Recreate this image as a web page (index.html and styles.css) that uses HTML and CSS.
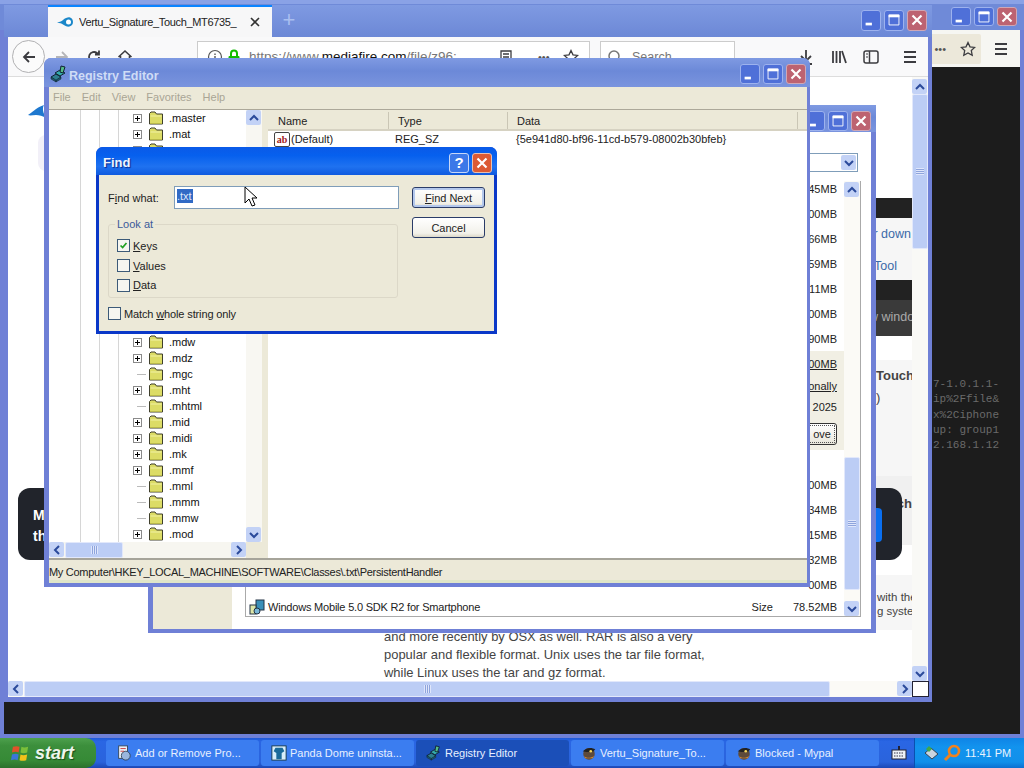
FILE: index.html
```html
<!DOCTYPE html>
<html lang="en">
<head>
<meta charset="utf-8">
<title>Registry Editor</title>
<link rel="stylesheet" href="styles.css">
</head>
<body>
<svg class="defs" width="0" height="0" aria-hidden="true">
  <symbol id="i-min" viewBox="0 0 20 20"><rect x="4" y="13" width="7" height="3" fill="#fff"/></symbol>
  <symbol id="i-max" viewBox="0 0 20 20"><path d="M4.5 4.5h11v11h-11z" fill="none" stroke="#fff"/><rect x="4" y="4" width="12" height="3" fill="#fff"/></symbol>
  <symbol id="i-close" viewBox="0 0 20 20"><path d="M5 5l10 10M15 5L5 15" stroke="#fff" stroke-width="2.4" fill="none"/></symbol>
  <symbol id="i-up" viewBox="0 0 14 14"><path d="M3 9l4-4 4 4" fill="none" stroke="#2b4a9b" stroke-width="2"/></symbol>
  <symbol id="i-down" viewBox="0 0 14 14"><path d="M3 5l4 4 4-4" fill="none" stroke="#2b4a9b" stroke-width="2"/></symbol>
  <symbol id="i-left" viewBox="0 0 14 14"><path d="M9 3L5 7l4 4" fill="none" stroke="#2b4a9b" stroke-width="2"/></symbol>
  <symbol id="i-right" viewBox="0 0 14 14"><path d="M5 3l4 4-4 4" fill="none" stroke="#2b4a9b" stroke-width="2"/></symbol>
  <symbol id="i-folder" viewBox="0 0 16 14"><path d="M1.500 13V2.500L3 1h4l1.500 2H14.500V13z" fill="#dcdc66" stroke="#3f3f2c"/><path d="M2.500 5h11" stroke="#f2f2a6"/><path d="M2 12.500h12" stroke="#b8b84a"/></symbol>
  <symbol id="i-plus" viewBox="0 0 9 9"><rect x=".5" y=".5" width="8" height="8" fill="#fff" stroke="#8a8a8a"/><path d="M2 4.500h5M4.500 2v5" stroke="#000"/></symbol>
  <symbol id="i-burger" viewBox="0 0 16 16"><path d="M2 3h12M2 8h12M2 13h12" stroke="#3c3c40" stroke-width="1.800"/></symbol>
  <symbol id="i-star" viewBox="0 0 16 16"><path d="M8 1.500l2 4.300 4.700.6-3.400 3.200.9 4.700L8 12l-4.200 2.300.9-4.700L1.300 6.400 6 5.800z" fill="none" stroke="#3c3c40" stroke-width="1.300"/></symbol>
  <symbol id="i-regedit" viewBox="0 0 18 18"><path d="M1 12l5-3 5 3-5 4z" fill="#2d7f8f" stroke="#123"/><path d="M5 8l5-3 5 3-5 3z" fill="#3aa" stroke="#123"/><path d="M1 12v2l5 3v-2zM11 12v2l-5 3v-2z" fill="#1d5a6b" stroke="#123" stroke-width=".5"/><path d="M11 1l4 1-2 6-3-1z" fill="#5b8" stroke="#123"/></symbol>
  <symbol id="i-fox" viewBox="0 0 18 18"><circle cx="9" cy="10" r="6.500" fill="#5d4a3a"/><path d="M2 7c4-4 10-5 14-2l-3 3H6z" fill="#222"/><path d="M3 12c3 3 8 3 12 0l-2 3H5z" fill="#d98a30"/><circle cx="11" cy="7" r="1.500" fill="#f5d65b"/></symbol>
</svg>

<div class="desktop">
  <!-- back browser window -->
  <section class="win win-back">
    <div class="win-title back-title">
      <span class="caps">
        <span class="cap"><svg><use href="#i-min"/></svg></span>
        <span class="cap"><svg><use href="#i-max"/></svg></span>
        <span class="cap cap-close"><svg><use href="#i-close"/></svg></span>
      </span>
    </div>
    <div class="back-toolbar">
      <span class="back-pill"><span class="dots">•••</span><svg class="ico16"><use href="#i-star"/></svg></span>
      <svg class="ico16"><use href="#i-burger"/></svg>
    </div>
    <pre class="term">7-1.0.1.1-
ip%2Ffile&amp;
x%2Ciphone
up: group1
2.168.1.12</pre>
  </section>

  <!-- main browser window -->
  <section class="win win-fox">
    <div class="tabbar">
      <div class="tab">
        <svg class="tab-logo" viewBox="0 0 16 10"><path d="M0 5.500C3 5 5 4 6 3 8 1 11 0 12.500 .3 15 1 16 3 16 5s-1 4-3.500 4.500C10.500 10 8 9 6 7.500 4.500 6.500 3 6 0 5.500z" fill="#1b87c9"/><ellipse cx="11.500" cy="5" rx="2.500" ry="2.500" fill="#fff"/></svg>
        <span class="tab-text">Vertu_Signature_Touch_MT6735_</span>
        <svg class="tab-x" viewBox="0 0 10 10"><path d="M1 1l8 8M9 1L1 9" stroke="#333" stroke-width="1.600"/></svg>
      </div>
      <span class="tab-plus">+</span>
      <span class="caps">
        <span class="cap"><svg><use href="#i-min"/></svg></span>
        <span class="cap"><svg><use href="#i-max"/></svg></span>
        <span class="cap cap-close"><svg><use href="#i-close"/></svg></span>
      </span>
    </div>
    <div class="navbar">
      <span class="back-btn"><svg class="ico16" viewBox="0 0 16 16"><path d="M14 8H3M8 3L3 8l5 5" fill="none" stroke="#3c3c40" stroke-width="1.800"/></svg></span>
      <svg class="ico16 nav-fwd" viewBox="0 0 16 16"><path d="M2 8h11M8 3l5 5-5 5" fill="none" stroke="#b5b5b8" stroke-width="1.800"/></svg>
      <svg class="ico16 nav-reload" viewBox="0 0 16 16"><path d="M13 8a5 5 0 1 1-2-4l2 1.500M13 1.500v4H9" fill="none" stroke="#3c3c40" stroke-width="1.800"/></svg>
      <svg class="ico16 nav-home" viewBox="0 0 16 16"><path d="M1.500 8L8 2l6.500 6M3.500 7v7h9V7" fill="none" stroke="#3c3c40" stroke-width="1.600"/></svg>
      <div class="urlbar">
        <svg class="ico16" viewBox="0 0 16 16"><circle cx="8" cy="8" r="6.500" fill="none" stroke="#555" stroke-width="1.200"/><path d="M8 7v4M8 4.500v1.500" stroke="#555" stroke-width="1.400"/></svg>
        <svg class="url-lock" viewBox="0 0 14 16"><path d="M4 7V4.500a3 3 0 0 1 6 0V7" fill="none" stroke="#12bc00" stroke-width="2"/><rect x="1.500" y="7" width="11" height="8" rx="1" fill="#12bc00"/></svg>
        <span class="url-text">https://www.<b>mediafire.com</b>/file/z96:</span>
        <svg class="ico16 url-page" viewBox="0 0 16 16"><path d="M3 2h10v12H3zM5 5h6M5 8h6M5 11h6" fill="none" stroke="#3c3c40" stroke-width="1.300"/></svg>
        <span class="dots url-dots">•••</span>
        <svg class="ico16"><use href="#i-star"/></svg>
      </div>
      <div class="searchbar">
        <svg class="ico16" viewBox="0 0 16 16"><circle cx="7" cy="7" r="5" fill="none" stroke="#777" stroke-width="1.500"/><path d="M11 11l4 4" stroke="#777" stroke-width="1.500"/></svg>
        <span>Search</span>
      </div>
      <svg class="ico16 nav-dl" viewBox="0 0 16 16"><path d="M8 1v10M3 7l5 5 5-5M2 15h12" fill="none" stroke="#3c3c40" stroke-width="1.800"/></svg>
      <svg class="ico16 nav-lib" viewBox="0 0 16 16"><path d="M2 2v12M5.500 2v12M9 2v12M11 2l4 12" fill="none" stroke="#3c3c40" stroke-width="1.800"/></svg>
      <svg class="ico16 nav-side" viewBox="0 0 16 16"><rect x="1" y="2" width="14" height="12" rx="2" fill="none" stroke="#3c3c40" stroke-width="1.500"/><path d="M6.500 2v12" stroke="#3c3c40" stroke-width="1.500"/><path d="M3 5h2M3 8h2" stroke="#3c3c40"/></svg>
      <svg class="ico16 nav-burger"><use href="#i-burger"/></svg>
    </div>
    <div class="fox-body">
      <div class="page">
        <div class="page-main">
          <svg class="page-logo" viewBox="0 0 18 16"><path d="M0 10C4 8 7 3 16 0c-2 3-1 8 2 13-3-2-7-3-10-3-3 0-6 1-8 0z" fill="#1e78cf"/></svg>
          <div class="page-ghost"></div>
          <p class="page-text">and more recently by OSX as well. RAR is also a very<br>popular and flexible format. Unix uses the tar file format,<br>while Linux uses the tar and gz format.</p>
        </div>
        <div class="page-side">
          <div class="side-dark"></div>
          <div class="side-links">
            <span class="side-down">or down</span>
            <span class="side-tool">Tool</span>
          </div>
          <div class="side-dark"></div>
          <div class="side-notice">New window</div>
          <div class="side-card">
            <b class="side-touch">Touch</b>
            <span class="side-paren">)</span>
          </div>
          <div class="side-card2"><b>Touch</b></div>
          <div class="side-white"></div>
          <div class="side-foot">with the<br>g system</div>
        </div>
        <div class="toast">
          <b>M<br>th</b>
          <span class="toast-btn"></span>
        </div>
      </div>
      <div class="sb sb-v sb-page">
        <span class="sb-btn"><svg><use href="#i-up"/></svg></span>
        <span class="sb-thumb thumb-page"><span class="grip-h"></span></span>
        <span class="sb-track"></span>
        <span class="sb-btn"><svg><use href="#i-down"/></svg></span>
      </div>
    </div>
    <div class="fox-foot">
      <div class="sb sb-h sb-pageh">
        <span class="sb-btn"><svg><use href="#i-left"/></svg></span>
        <span class="sb-thumb thumb-pageh"><span class="grip-v"></span></span>
        <span class="sb-track"></span>
        <span class="sb-btn"><svg><use href="#i-right"/></svg></span>
      </div>
      <span class="fox-corner"></span>
    </div>
  </section>

  <!-- Add or Remove Programs -->
  <section class="win win-arp">
    <div class="win-title arp-title">
      <span class="caps">
        <span class="cap"><svg><use href="#i-min"/></svg></span>
        <span class="cap"><svg><use href="#i-max"/></svg></span>
        <span class="cap cap-close"><svg><use href="#i-close"/></svg></span>
      </span>
    </div>
    <div class="arp-body">
      <div class="arp-side"></div>
      <div class="arp-content">
        <div class="arp-combo"><span class="sb-btn"><svg><use href="#i-down"/></svg></span></div>
        <div class="arp-list">
          <div class="arp-rows">
            <div class="arp-row">45MB</div>
            <div class="arp-row">00MB</div>
            <div class="arp-row">66MB</div>
            <div class="arp-row">59MB</div>
            <div class="arp-row">11MB</div>
            <div class="arp-row">00MB</div>
            <div class="arp-row">90MB</div>
            <div class="arp-selected">
              <div class="arp-row"><u>00MB</u></div>
              <div class="arp-row arp-r20"><u>onally</u></div>
              <div class="arp-row arp-r22">2025</div>
              <div class="arp-row arp-r32"><span class="arp-btn">ove</span></div>
            </div>
            <div class="arp-gap"></div>
            <div class="arp-row">00MB</div>
            <div class="arp-row">34MB</div>
            <div class="arp-row">15MB</div>
            <div class="arp-row">32MB</div>
            <div class="arp-row">00MB</div>
            <div class="arp-row arp-r20 arp-last">
              <svg class="arp-ico" viewBox="0 0 16 16"><rect x="7" y="1" width="8" height="10" fill="#3a8fb8" stroke="#234"/><rect x="1" y="6" width="6" height="9" fill="#dfe7a8" stroke="#234"/><circle cx="8" cy="12" r="3" fill="#7ab8d8" stroke="#234"/></svg>
              <span class="arp-name">Windows Mobile 5.0 SDK R2 for Smartphone</span>
              <span class="arp-size">Size</span>
              <span>78.52MB</span>
            </div>
          </div>
          <div class="sb sb-v sb-arp">
            <span class="sb-btn"><svg><use href="#i-up"/></svg></span>
            <span class="sb-track arp-track1"></span>
            <span class="sb-thumb thumb-arp"><span class="grip-h"></span></span>
            <span class="sb-track"></span>
            <span class="sb-btn"><svg><use href="#i-down"/></svg></span>
          </div>
        </div>
      </div>
    </div>
  </section>

  <!-- Registry Editor -->
  <section class="win win-reg">
    <div class="win-title reg-title">
      <svg class="reg-ico"><use href="#i-regedit"/></svg>
      <span class="reg-name">Registry Editor</span>
      <span class="caps">
        <span class="cap"><svg><use href="#i-min"/></svg></span>
        <span class="cap"><svg><use href="#i-max"/></svg></span>
        <span class="cap cap-close"><svg><use href="#i-close"/></svg></span>
      </span>
    </div>
    <nav class="reg-menu"><span>File</span><span>Edit</span><span>View</span><span>Favorites</span><span>Help</span></nav>
    <div class="reg-main">
      <div class="tree-pane">
        <div class="tree-top">
          <ul class="tree">
            <li><svg class="t-box"><use href="#i-plus"/></svg><svg class="t-folder"><use href="#i-folder"/></svg>.master</li>
            <li><svg class="t-box"><use href="#i-plus"/></svg><svg class="t-folder"><use href="#i-folder"/></svg>.mat</li>
            <li><svg class="t-box"><use href="#i-plus"/></svg><svg class="t-folder"><use href="#i-folder"/></svg></li>
            <li class="tree-covered"></li>
            <li><svg class="t-box"><use href="#i-plus"/></svg><svg class="t-folder"><use href="#i-folder"/></svg>.mdw</li>
            <li><svg class="t-box"><use href="#i-plus"/></svg><svg class="t-folder"><use href="#i-folder"/></svg>.mdz</li>
            <li><span class="t-leaf"></span><svg class="t-folder"><use href="#i-folder"/></svg>.mgc</li>
            <li><svg class="t-box"><use href="#i-plus"/></svg><svg class="t-folder"><use href="#i-folder"/></svg>.mht</li>
            <li><span class="t-leaf"></span><svg class="t-folder"><use href="#i-folder"/></svg>.mhtml</li>
            <li><svg class="t-box"><use href="#i-plus"/></svg><svg class="t-folder"><use href="#i-folder"/></svg>.mid</li>
            <li><svg class="t-box"><use href="#i-plus"/></svg><svg class="t-folder"><use href="#i-folder"/></svg>.midi</li>
            <li><svg class="t-box"><use href="#i-plus"/></svg><svg class="t-folder"><use href="#i-folder"/></svg>.mk</li>
            <li><svg class="t-box"><use href="#i-plus"/></svg><svg class="t-folder"><use href="#i-folder"/></svg>.mmf</li>
            <li><span class="t-leaf"></span><svg class="t-folder"><use href="#i-folder"/></svg>.mml</li>
            <li><span class="t-leaf"></span><svg class="t-folder"><use href="#i-folder"/></svg>.mmm</li>
            <li><span class="t-leaf"></span><svg class="t-folder"><use href="#i-folder"/></svg>.mmw</li>
            <li><svg class="t-box"><use href="#i-plus"/></svg><svg class="t-folder"><use href="#i-folder"/></svg>.mod</li>
          </ul>
          <div class="sb sb-v sb-tree">
            <span class="sb-btn"><svg><use href="#i-up"/></svg></span>
            <span class="sb-track"></span>
            <span class="sb-btn"><svg><use href="#i-down"/></svg></span>
          </div>
        </div>
        <div class="tree-bottom">
          <div class="sb sb-h sb-treeh">
            <span class="sb-btn"><svg><use href="#i-left"/></svg></span>
            <span class="sb-thumb thumb-tree"><span class="grip-v"></span></span>
            <span class="sb-track"></span>
            <span class="sb-btn"><svg><use href="#i-right"/></svg></span>
          </div>
          <span class="tree-corner"></span>
        </div>
      </div>
      <div class="list-pane">
        <div class="list-head"><span class="lh-name">Name</span><span class="lh-type">Type</span><span class="lh-data">Data</span><span class="lh-rest"></span></div>
        <div class="list-row">
          <span class="ab-ico">ab</span>
          <span class="lc-name">(Default)</span>
          <span class="lc-type">REG_SZ</span>
          <span class="lc-data">{5e941d80-bf96-11cd-b579-08002b30bfeb}</span>
        </div>
      </div>
    </div>
    <div class="reg-status">My Computer\HKEY_LOCAL_MACHINE\SOFTWARE\Classes\.txt\PersistentHandler</div>
  </section>

  <!-- Find dialog -->
  <section class="find">
    <div class="find-title">
      <span class="find-name">Find</span>
      <span class="find-help">?</span>
      <span class="find-close"><svg><use href="#i-close"/></svg></span>
    </div>
    <div class="find-body">
      <div class="find-left">
        <div class="find-row">
          <label class="find-label">F<u>i</u>nd what:</label>
          <div class="find-input"><span class="find-sel">.txt</span></div>
        </div>
        <fieldset class="find-group">
          <legend>Look at</legend>
          <label class="chk"><span class="box"><svg viewBox="0 0 13 13"><path d="M3 6.500l2.500 2.500L10 3.500" fill="none" stroke="#21a121" stroke-width="2"/></svg></span><span><u>K</u>eys</span></label>
          <label class="chk"><span class="box"></span><span><u>V</u>alues</span></label>
          <label class="chk"><span class="box"></span><span><u>D</u>ata</span></label>
        </fieldset>
        <label class="chk chk-match"><span class="box"></span><span>Match <u>w</u>hole string only</span></label>
      </div>
      <div class="find-right">
        <button class="xp-btn xp-default" type="button"><u>F</u>ind Next</button>
        <button class="xp-btn" type="button">Cancel</button>
      </div>
    </div>
  </section>

  <svg class="cursor" viewBox="0 0 14 22"><path d="M1 1v16l4-4 3 7 3-1-3-7h5z" fill="#fff" stroke="#000"/></svg>

  <!-- Taskbar -->
  <footer class="taskbar">
    <div class="start">
      <svg class="start-flag" viewBox="0 0 20 20"><path d="M2 3c3-1 5-1 7 0l-1 6c-2-1-4-1-7 0z" fill="#e0522a"/><path d="M11 3c2 1 4 1 7 0l-1 6c-3 1-5 1-7 0z" fill="#7bbf3a"/><path d="M1 11c3-1 5-1 7 0l-1 6c-2-1-4-1-7 0z" fill="#3b76d8"/><path d="M10 11c2 1 4 1 7 0l-1 6c-3 1-5 1-7 0z" fill="#f2c21a"/></svg>
      <span class="start-text">start</span>
    </div>
    <div class="tasks">
      <div class="task"><svg class="task-ico" viewBox="0 0 18 18"><rect x="3" y="1" width="10" height="14" fill="#eaf0f8" stroke="#345"/><circle cx="11" cy="12" r="5" fill="#9ab6dd" stroke="#345"/><path d="M5 4h6M5 7h4" stroke="#c33"/></svg><span>Add or Remove Pro...</span></div>
      <div class="task"><svg class="task-ico" viewBox="0 0 18 18"><rect x="1" y="1" width="16" height="16" fill="#d8eefb" stroke="#134"/><path d="M5 3h8l2 4-3 2v7H6V9L3 7z" fill="#1a6a9a"/></svg><span>Panda Dome uninsta...</span></div>
      <div class="task task-active"><svg class="task-ico"><use href="#i-regedit"/></svg><span>Registry Editor</span></div>
      <div class="task"><svg class="task-ico"><use href="#i-fox"/></svg><span>Vertu_Signature_To...</span></div>
      <div class="task"><svg class="task-ico"><use href="#i-fox"/></svg><span>Blocked - Mypal</span></div>
    </div>
    <svg class="kbd" viewBox="0 0 16 14"><path d="M8 0v4" stroke="#223" stroke-width="2"/><rect x="1" y="4" width="14" height="9" fill="#eef2f8" stroke="#223"/><path d="M3 7h10M3 10h10" stroke="#334" stroke-dasharray="1.500 1"/></svg>
    <div class="tray">
      <svg class="tray-net" viewBox="0 0 16 16"><path d="M1 8l6-5 7 6-6 5z" fill="#c9d4e0" stroke="#345"/><path d="M5 1l3 3-3 3-3-3z" fill="#3fa84a"/></svg>
      <svg class="tray-find" viewBox="0 0 18 18"><circle cx="11" cy="7" r="5" fill="none" stroke="#f0821e" stroke-width="2.600"/><path d="M7 11l-5 5" stroke="#f0821e" stroke-width="3"/></svg>
      <span class="clock">11:41 PM</span>
    </div>
  </footer>
</div>
</body>
</html>
```
FILE: styles.css
```css
* { box-sizing: border-box; }
html, body { margin: 0; padding: 0; background: #1c1c1c; }
body { font-family: "Liberation Sans", Arial, sans-serif; font-size: 11px; color: #111; }
.defs { position: absolute; }
ul { list-style: none; margin: 0; padding: 0; }

.desktop { position: relative; width: 1024px; height: 768px; overflow: hidden; background: #1c1c1c; display: flex; flex-direction: column; justify-content: flex-end; }

/* windows */
.win { position: absolute; display: flex; flex-direction: column; background: #6f80d6; border-radius: 7px 7px 0 0; }
.win-title { display: flex; align-items: flex-start; background: linear-gradient(#7f9ae2, #6c89d8 45%, #7a94de); }
.caps { display: flex; gap: 3px; margin-left: auto; }
.cap { width: 20px; height: 20px; border-radius: 3px; background: #4f70d8; border: 1px solid #9db2ee; display: block; }
.cap svg { display: block; width: 18px; height: 18px; }
.cap-close { background: #bd6371; border-color: #cfa7b5; }

.win-back { left: 0; top: 0; width: 1024px; height: 738px; padding: 0 4px 4px; }
.back-title { height: 30px; padding: 7px 7px 0 0; background: linear-gradient(#8aa2e6 0 4px, #6f8ad8 4px); margin: 0 -4px; }
.win-back .cap { height: 19px; }
.back-toolbar { height: 37px; background: #f6f6f2; display: flex; align-items: center; justify-content: flex-end; padding-right: 11px; }
.back-pill { display: flex; align-items: center; justify-content: flex-end; gap: 14px; width: 70px; height: 30px; margin-right: 12px; background: #ece8da; border-radius: 2px; padding-right: 5px; }
.term { flex: 1; margin: 0; background: #1c1c1c; padding: 310px 0 0 929px; color: #6a6a6a; font: 11px/15.250px "Liberation Mono", monospace; overflow: hidden; }

.ico16 { width: 16px; height: 16px; flex: none; display: block; }
.dots { color: #555; font-size: 11px; white-space: nowrap; }

.win-fox { left: 4px; top: 5px; width: 928px; height: 697px; padding: 0 4px 5px; border-radius: 4px 4px 0 0; }
.tabbar { height: 32px; display: flex; align-items: stretch; margin: 0 -4px; padding: 0 5px 0 44px; background: linear-gradient(#7f9ae2, #6c88d6); }
.tab { width: 224px; background: #f7f7f8; border-top: 2px solid #0a84ff; display: flex; align-items: center; padding: 0 10px 0 9px; }
.tab-logo { width: 16px; height: 10px; flex: none; }
.tab-text { margin-left: 6px; font-size: 11px; letter-spacing: -.33px; color: #222; white-space: nowrap; overflow: hidden; width: 162px; }
.tab-x { width: 10px; height: 10px; margin-left: 9px; }
.tab-plus { width: 34px; text-align: center; color: #a9bff0; font-size: 22px; line-height: 30px; }
.tabbar .caps { margin-top: 5px; height: 21px; }
.tabbar .cap { height: 21px; }

.navbar { height: 40px; flex: none; background: #f9f9fa; border-bottom: 1px solid #ddd; display: flex; align-items: center; padding-left: 4px; }
.back-btn { width: 33px; height: 33px; border-radius: 50%; background: #fbfbfb; border: 1px solid #b1b1b3; display: flex; align-items: center; justify-content: center; }
.nav-fwd { margin-left: 9px; }
.nav-reload { margin-left: 16px; }
.nav-home { margin-left: 15px; }
.urlbar { width: 393px; height: 32px; margin-left: 64px; border: 1px solid #ccc; background: #fff; display: flex; align-items: center; padding: 0 7px 0 9px; }
.url-lock { width: 14px; height: 16px; margin-left: 4px; flex: none; }
.url-text { margin-left: 8px; font-size: 13.500px; color: #777; white-space: nowrap; width: 249px; overflow: hidden; }
.url-text b { font-weight: normal; color: #111; }
.url-dots { margin: 0 13px 0 24px; }
.searchbar { width: 135px; height: 32px; margin-left: 10px; border: 1px solid #ccc; background: #fff; display: flex; align-items: center; gap: 9px; padding-left: 6px; color: #777; font-size: 12.500px; }
.nav-dl { margin-left: 63px; }
.nav-lib { margin-left: 17px; }
.nav-side { margin-left: 16px; }
.nav-burger { margin-left: 23px; }

.fox-body { flex: 1; min-height: 0; display: flex; background: #fff; }
.page { position: relative; flex: 1; display: flex; overflow: hidden; background: #fff; }
.page-main { flex: 1; display: flex; flex-direction: column; padding-top: 28px; min-width: 0; }
.page-logo { width: 18px; height: 16px; margin-left: 20px; flex: none; }
.page-ghost { width: 10px; height: 36px; margin: 14px 0 0 30px; background: #f2f0f8; border-radius: 8px 0 0 8px; }
.page-text { margin: auto 0 -1px 376px; font-size: 12.950px; line-height: 18px; color: #444; white-space: nowrap; }
.page-side { width: 64px; flex: none; display: flex; flex-direction: column; padding-top: 121px; color: #444; overflow: hidden; white-space: nowrap; }
.side-dark { height: 20px; background: #222; flex: none; }
.side-links { height: 62px; background: #f6f6f6; display: flex; flex-direction: column; flex: none; color: #3c6aa8; font-size: 12.500px; }
.side-down { text-align: right; margin-top: 9px; padding-right: 1px; }
.side-tool { margin: 18px 0 0 26px; }
.side-notice { height: 36px; background: #3a3a3a; color: #aaa; font-size: 12.500px; line-height: 35px; flex: none; padding-left: 5px; }
.side-card { height: 116px; margin-top: 24px; background: #f6f6f6; display: flex; flex-direction: column; flex: none; font-size: 13px; padding-left: 28px; }
.side-touch { margin-top: 8px; }
.side-paren { margin-top: 7px; }
.side-card2 { height: 69px; background: #f0f0f0; flex: none; padding: 20px 0 0 26px; font-size: 13px; color: #444; }
.side-white { height: 30px; flex: none; }
.side-foot { height: 55px; background: #f6f6f6; flex: none; font-size: 11.500px; line-height: 14px; padding: 15px 0 0 29px; }
.toast { position: absolute; left: 10px; top: 411px; width: 884px; height: 72px; border-radius: 12px; background: #21242b; color: #fff; font-size: 14px; line-height: 21px; padding: 17px 15px; }
.toast-btn { position: absolute; left: 800px; top: 20px; width: 64px; height: 34px; border-radius: 4px; background: #0a6ff0; }

.fox-foot { height: 16px; flex: none; display: flex; background: #f3f1ea; }
.fox-corner { width: 17px; height: 16px; background: #fff; border: 1px solid #223; flex: none; margin-right: -1px; }

/* scrollbars */
.sb { display: flex; background: #fbfaf6; flex: none; }
.sb-v { flex-direction: column; width: 16px; }
.sb-h { flex-direction: row; height: 16px; }
.sb-btn { width: 15px; height: 15px; flex: none; background: #c3d2f6; border-radius: 2px; display: flex; align-items: center; justify-content: center; }
.sb-btn svg { width: 14px; height: 14px; display: block; }
.sb-track { flex: 1; }
.sb-thumb { display: flex; align-items: center; justify-content: center; background: #bccdf5; border: 1px solid #e2e8fb; border-radius: 2px; flex: none; }
.grip-h { width: 8px; height: 7px; background: repeating-linear-gradient(#dfe6fb 0 1px, #8ea4dc 1px 2px); }
.grip-v { width: 7px; height: 8px; background: repeating-linear-gradient(90deg, #dfe6fb 0 1px, #8ea4dc 1px 2px); }
.sb-page { width: 16px; background: #f9f9f6; padding-top: 2px; }
.thumb-page { height: 155px; }
.sb-pageh { flex: 1; min-width: 0; }
.thumb-pageh { width: 806px; margin-left: 1px; }
.sb-tree { background: #f8f7f2; }
.sb-treeh { flex: 1; min-width: 0; background: #f7f6f0; }
.thumb-tree { width: 58px; margin-left: 1px; }
.tree-corner { width: 16px; background: #ece9d8; flex: none; }

/* Add or remove programs */
.win-arp { left: 148px; top: 105px; width: 728px; height: 528px; padding: 0 5px 4px; }
.arp-title { height: 27px; margin: 0 -5px; padding: 6px 5px 0 0; }
.arp-body { flex: 1; min-height: 0; display: flex; background: #fff; }
.arp-side { width: 79px; background: #ece9d8; }
.arp-content { flex: 1; min-width: 0; padding: 21px 10px 12px 13px; display: flex; flex-direction: column; }
.arp-combo { height: 19px; margin-right: 3px; border: 1px solid #7f9db9; display: flex; justify-content: flex-end; align-items: center; padding-right: 1px; flex: none; }
.arp-combo .sb-btn { height: 15px; }
.arp-list { flex: 1; min-height: 0; margin-top: 9px; border: 1px solid #aaa; border-top: 0; display: flex; overflow: hidden; }
.arp-rows { flex: 1; min-width: 0; margin-top: -5px; }
.arp-row { height: 25px; display: flex; align-items: center; justify-content: flex-end; padding-right: 7px; color: #222; }
.arp-r20 { height: 20px; }
.arp-r22 { height: 22px; }
.arp-r32 { height: 32px; }
.arp-selected { background: #f1efe4; }
.arp-gap { height: 22px; }
.arp-btn { border: 1px solid #333; border-radius: 3px; background: linear-gradient(#fff, #e8e6da); height: 22px; width: 58px; line-height: 20px; text-align: right; padding-right: 5px; outline: 1px dotted #555; outline-offset: -3px; }
.arp-last { justify-content: flex-start; padding-left: 3px; }
.arp-ico { width: 16px; height: 16px; flex: none; }
.arp-name { margin-left: 3px; flex: 1; letter-spacing: -.2px; }
.arp-size { margin-right: 20px; }
.sb-arp { background: #fbfaf6; padding-top: 1px; }
.arp-track1 { flex: none; height: 260px; }
.thumb-arp { height: 133px; }

/* Registry */
.win-reg { left: 44px; top: 58px; width: 766px; height: 529px; padding: 0 3px 4px 5px; }
.reg-title { height: 29px; margin: 0 -3px 0 -5px; padding: 6px 4px 0 6px; border-radius: 7px 7px 0 0; }
.reg-ico { width: 18px; height: 18px; flex: none; margin-top: 1px; }
.reg-name { margin: 5px 0 0 1px; font-weight: bold; font-size: 12.500px; color: #cfdcf6; }
.reg-menu { height: 23px; flex: none; background: #ece9d8; border-bottom: 1px solid #aca899; display: flex; align-items: center; gap: 11px; padding: 0 0 2px 4px; color: #a9a595; font-size: 11px; }
.reg-main { flex: 1; min-height: 0; display: flex; background: #ece9d8; border-bottom: 2px solid #a6a49a; }
.tree-pane { width: 215px; flex: none; display: flex; flex-direction: column; background: #fff; border-right: 2px solid #ece9d8; }
.tree-top { flex: 1; min-height: 0; display: flex; }
.tree-bottom { height: 16px; flex: none; display: flex; }
.tree { flex: 1; min-width: 0; overflow: hidden; background:
  linear-gradient(#d6d6d6, #d6d6d6) 31px 0 / 1px 100% no-repeat,
  linear-gradient(#d6d6d6, #d6d6d6) 50px 0 / 1px 100% no-repeat,
  linear-gradient(#d6d6d6, #d6d6d6) 69px 0 / 1px 100% no-repeat; }
.tree li { height: 16px; display: flex; align-items: center; padding-left: 84px; font-size: 11px; color: #111; }
.tree .tree-covered { height: 176px; }
.t-box { width: 9px; height: 9px; flex: none; }
.t-leaf { width: 9px; height: 1px; background: #bbb; flex: none; margin-left: 4px; margin-right: -4px; }
.t-folder { width: 16px; height: 14px; margin: 0 5px 0 6px; flex: none; }
.list-pane { flex: 1; min-width: 0; margin-left: 4px; background: #fff; margin-top: 2px; }
.list-head { height: 19px; display: flex; background: #ece9d8; border-bottom: 2px solid #d6d2c2; align-items: center; color: #222; font-size: 11px; }
.list-head span { border-right: 1px solid #cac6b5; height: 100%; line-height: 18px; flex: none; }
.lh-name { width: 121px; padding-left: 10px; }
.lh-type { width: 119px; padding-left: 9px; }
.lh-data { width: 290px; padding-left: 9px; }
.list-head .lh-rest { flex: 1; border: 0; }
.list-row { height: 18px; display: flex; align-items: center; margin-top: -1px; padding-left: 6px; color: #222; font-size: 11px; white-space: nowrap; }
.ab-ico { width: 16px; height: 15px; flex: none; font: bold 10px/14px "Liberation Serif", serif; color: #a01818; border: 1px solid #444; border-radius: 2px; background: #fff; text-align: center; }
.lc-name { width: 104px; margin-left: 1px; }
.lc-type { width: 121px; }
.reg-status { height: 23px; flex: none; background: #ece9d8; padding-top: 3px; line-height: 19px; font-size: 11px; letter-spacing: -.29px; white-space: nowrap; color: #222; box-shadow: inset 0 -3px 0 #dfe5c8; }

/* Find */
.find { position: absolute; left: 96px; top: 147px; width: 401px; height: 187px; background: #0a38c8; border-radius: 7px 7px 0 0; padding: 0 3px 3px; display: flex; flex-direction: column; }
.find-title { height: 28px; flex: none; margin: 0 -3px; padding: 6px 5px 0 7px; display: flex; gap: 3px; background: linear-gradient(#0a5ae8, #0660ee 30%, #1f72f0 70%, #0f5adf); border-radius: 7px 7px 0 0; }
.find-name { flex: 1; color: #eef4ff; font-weight: bold; font-size: 13px; line-height: 20px; text-shadow: 1px 1px 1px #0a2a90; }
.find-help { width: 20px; height: 20px; border: 1px solid #c8d8f8; border-radius: 3px; background: #3c78e8; color: #fff; font-weight: bold; font-size: 15px; line-height: 18px; text-align: center; }
.find-close { width: 20px; height: 20px; border: 1px solid #e8c0b0; border-radius: 3px; background: #dc5a34; }
.find-close svg { width: 18px; height: 18px; display: block; }
.find-body { flex: 1; background: #ece9d8; display: flex; padding: 11px 0 0 9px; }
.find-left { width: 291px; flex: none; display: flex; flex-direction: column; }
.find-row { display: flex; align-items: center; height: 23px; }
.find-label { width: 66px; flex: none; color: #222; }
.find-input { flex: 1; height: 23px; border: 1px solid #7f9db9; background: #fff; padding: 2px 0 0 2px; line-height: 14px; }
.find-sel { background: #316ac5; color: #dfe8fa; display: inline-block; padding-right: 1px; height: 14px; }
.find-group { margin: 9px 0 0; padding: 5px 8px 0; height: 80px; border: 1px solid #dcd8c8; border-radius: 3px; width: 290px; }
.find-group legend { padding: 0 2px; margin-left: -2px; color: #3b5a9a; line-height: 13px; }
.chk { display: flex; align-items: center; gap: 3px; height: 19.700px; color: #222; }
.box { width: 13px; height: 13px; border: 1px solid #3c5a78; background: #f6f6f0; flex: none; display: block; }
.box svg { display: block; width: 11px; height: 11px; }
.chk-match { margin-top: 6px; letter-spacing: -.13px; }
.find-right { margin-left: 13px; width: 73px; display: flex; flex-direction: column; gap: 9px; padding-top: 1px; }
.xp-btn { height: 21px; width: 73px; padding: 0; font: 11px "Liberation Sans", Arial, sans-serif; color: #222; background: linear-gradient(#fff, #f2f1ea 80%, #dcd8c8); border: 1px solid #2a3c68; border-radius: 3px; }
.xp-default { box-shadow: inset 0 0 0 2px #b4c8ec; }
.cursor { position: absolute; left: 244px; top: 186px; width: 14px; height: 22px; }

/* Taskbar */
.taskbar { position: relative; height: 30px; flex: none; display: flex; align-items: stretch; background: linear-gradient(#1f5ad8, #2a66e4 12%, #2a63dc 80%, #1c47b4); }
.start { width: 96px; flex: none; display: flex; align-items: center; padding-left: 11px; gap: 5px; background: linear-gradient(#4da04d, #3c8f3c 25%, #368a36 75%, #2b702b); border-radius: 0 10px 10px 0; }
.start-flag { width: 19px; height: 19px; }
.start-text { color: #eef6ee; font-style: italic; font-weight: bold; font-size: 18px; text-shadow: 1px 1px 1px #184a18; }
.tasks { display: flex; gap: 2px; margin-left: 10px; padding: 2px 0; }
.task { width: 153px; display: flex; align-items: center; gap: 3px; padding-left: 10px; background: #3b7df0; border-radius: 3px; color: #e8f0ff; font-size: 11px; white-space: nowrap; }
.task-active { background: #1b4fb8; }
.task-ico { width: 16px; height: 16px; flex: none; }
.kbd { width: 16px; height: 14px; align-self: center; margin-left: 12px; }
.tray { margin-left: auto; width: 110px; display: flex; align-items: center; padding-left: 9px; background: linear-gradient(#0f84e6, #1293ee 30%, #1190ea 80%, #0c6fd0); border-left: 1px solid #0a50b0; }
.tray-net { width: 16px; height: 16px; flex: none; }
.tray-find { width: 18px; height: 18px; flex: none; margin-left: 3px; }
.clock { margin-left: 4px; color: #eaf4ff; font-size: 11px; white-space: nowrap; }
```
